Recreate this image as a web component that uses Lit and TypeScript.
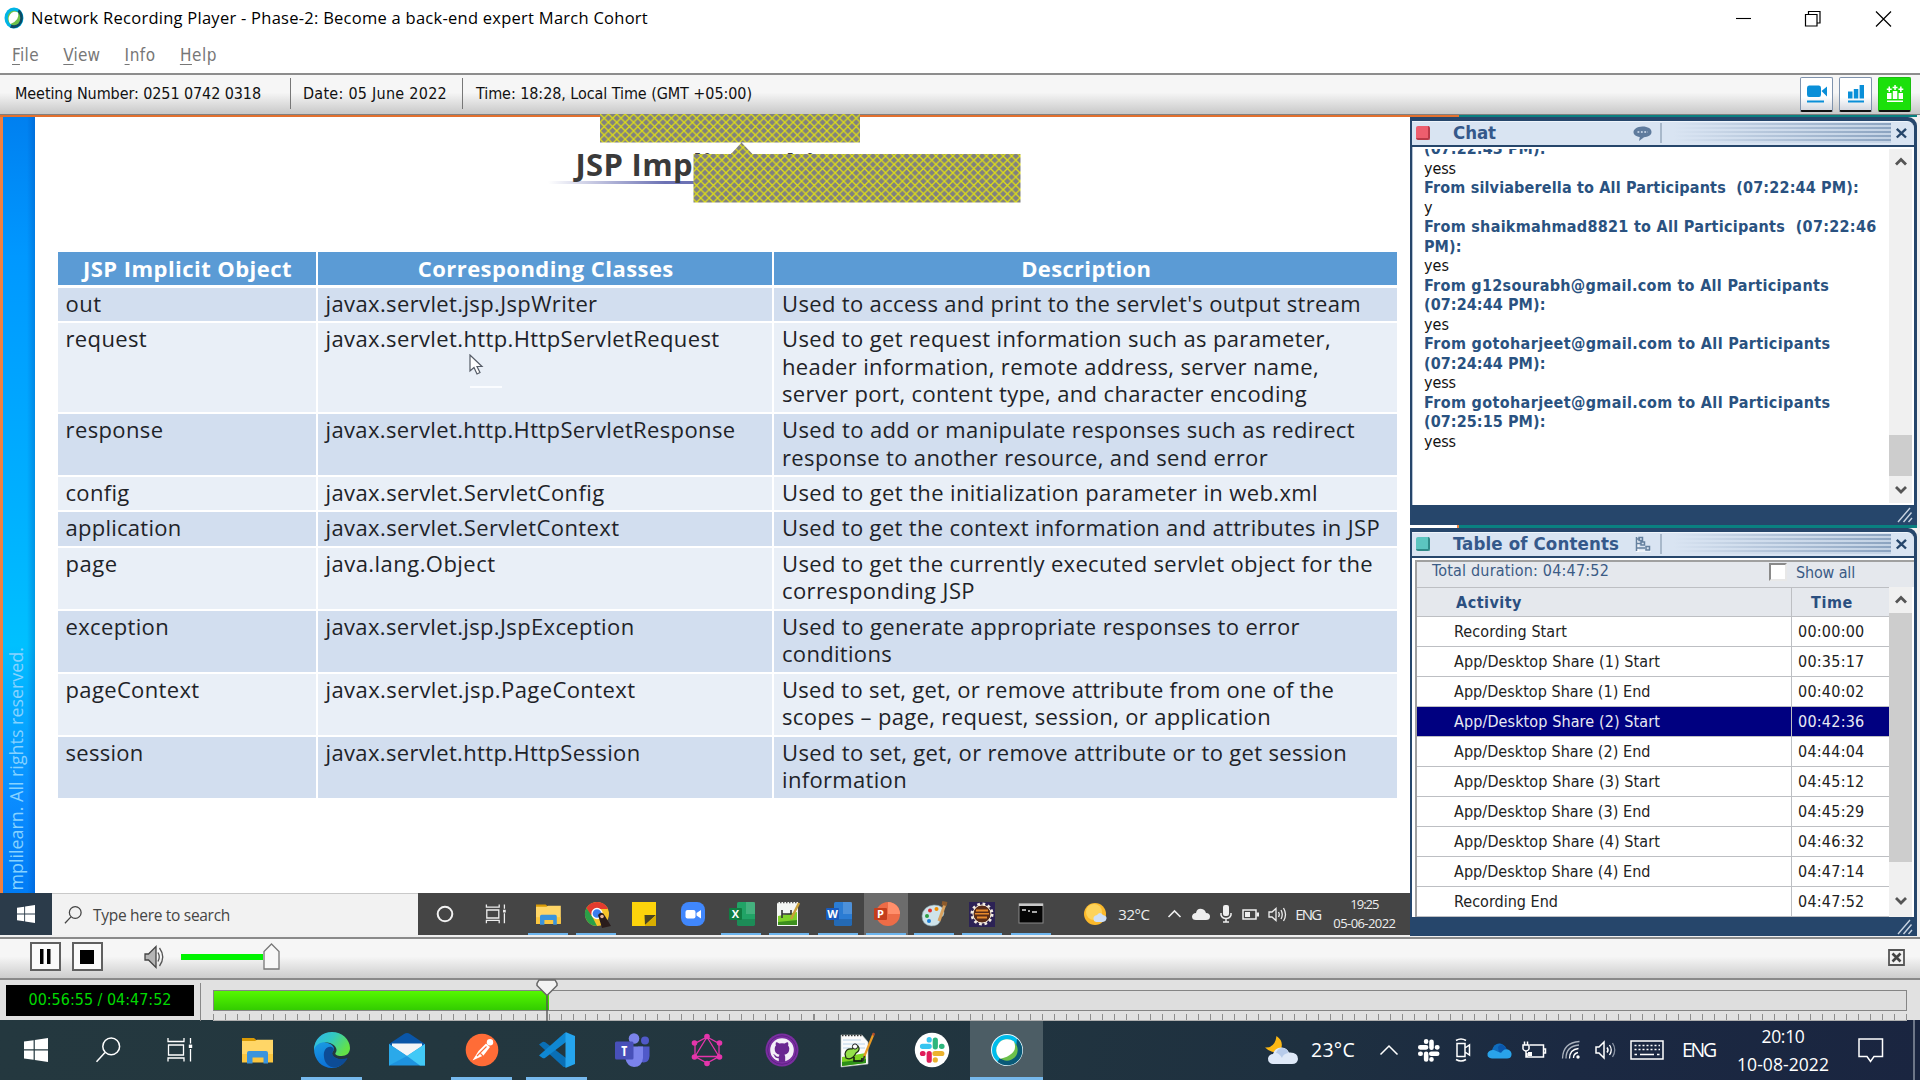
import { LitElement, html, svg, css } from "lit";
import { customElement } from "lit/decorators.js";
import { classMap } from "lit/directives/class-map.js";
import { styleMap } from "lit/directives/style-map.js";

type Line = [text: string, width: number];

const HEADERS: Line[] = [
  ["JSP Implicit Object", 209],
  ["Corresponding Classes", 256],
  ["Description", 130],
];

const OBJECTS: { h: number; name: Line; cls: Line; desc: Line[] }[] = [
  { h: 35.5, name: ["out", 36], cls: ["javax.servlet.jsp.JspWriter", 272], desc: [["Used to access and print to the servlet's output stream", 579]] },
  { h: 91, name: ["request", 81.5], cls: ["javax.servlet.http.HttpServletRequest", 394], desc: [["Used to get request information such as parameter,", 549], ["header information, remote address, server name,", 537], ["server port, content type, and character encoding", 525]] },
  { h: 62.5, name: ["response", 98], cls: ["javax.servlet.http.HttpServletResponse", 410], desc: [["Used to add or manipulate responses such as redirect", 573], ["response to another resource, and send error", 486]] },
  { h: 35.5, name: ["config", 64], cls: ["javax.servlet.ServletConfig", 279], desc: [["Used to get the initialization parameter in web.xml", 536]] },
  { h: 35.5, name: ["application", 116], cls: ["javax.servlet.ServletContext", 294], desc: [["Used to get the context information and attributes in JSP", 598]] },
  { h: 63, name: ["page", 52], cls: ["java.lang.Object", 170], desc: [["Used to get the currently executed servlet object for the", 591], ["corresponding JSP", 193]] },
  { h: 63, name: ["exception", 103.5], cls: ["javax.servlet.jsp.JspException", 309], desc: [["Used to generate appropriate responses to error", 518], ["conditions", 110]] },
  { h: 63, name: ["pageContext", 134], cls: ["javax.servlet.jsp.PageContext", 310], desc: [["Used to set, get, or remove attribute from one of the", 552], ["scopes – page, request, session, or application", 489]] },
  { h: 63.5, name: ["session", 78], cls: ["javax.servlet.http.HttpSession", 315], desc: [["Used to set, get, or remove attribute or to get session", 565], ["information", 125]] },
];

const CHAT: { text: string; w: number; head?: boolean }[] = [
  { text: "(07:22:43 PM):", w: 121.5, head: true },
  { text: "yess", w: 32 },
  { text: "From silviaberella to All Participants  (07:22:44 PM):", w: 435, head: true },
  { text: "y", w: 8 },
  { text: "From shaikmahmad8821 to All Participants  (07:22:46", w: 452.5, head: true },
  { text: "PM):", w: 37.5, head: true },
  { text: "yes", w: 25 },
  { text: "From g12sourabh@gmail.com to All Participants", w: 405, head: true },
  { text: "(07:24:44 PM):", w: 121.5, head: true },
  { text: "yes", w: 25 },
  { text: "From gotoharjeet@gmail.com to All Participants", w: 406.5, head: true },
  { text: "(07:24:44 PM):", w: 121.5, head: true },
  { text: "yess", w: 32 },
  { text: "From gotoharjeet@gmail.com to All Participants", w: 406.5, head: true },
  { text: "(07:25:15 PM):", w: 121.5, head: true },
  { text: "yess", w: 32 },
];

const TOC: [string, number, string][] = [
  ["Recording Start", 113, "00:00:00"],
  ["App/Desktop Share (1) Start", 206, "00:35:17"],
  ["App/Desktop Share (1) End", 196.5, "00:40:02"],
  ["App/Desktop Share (2) Start", 206, "00:42:36"],
  ["App/Desktop Share (2) End", 196.5, "04:44:04"],
  ["App/Desktop Share (3) Start", 206, "04:45:12"],
  ["App/Desktop Share (3) End", 196.5, "04:45:29"],
  ["App/Desktop Share (4) Start", 206, "04:46:32"],
  ["App/Desktop Share (4) End", 196.5, "04:47:14"],
  ["Recording End", 104, "04:47:52"],
];
const SELECTED = 3;

const ELAPSED = 3415;
const DURATION = 17272;

const icon = (w: number, h: number, body: unknown, vb?: string) =>
  html`<svg class="ic" width=${w} height=${h} viewBox=${vb ?? `0 0 ${w} ${h}`}>${body}</svg>`;

const winLogo = svg`<path fill="#fff" d="M8 11.6 17.6 10.2V19.3H8ZM18.8 10 32 8V19.3H18.8ZM8 20.6H17.6V29.8L8 28.4ZM18.8 20.6H32V32L18.8 30Z"/>`;
const search = (c: string, w: number) =>
  svg`<g fill="none" stroke=${c} stroke-width=${w}><circle cx="23.2" cy="16.4" r="8.4"/><path d="M17 22.6 8.5 31.8"/></g>`;
const taskView = (c: string, w: number) =>
  svg`<g fill="none" stroke=${c} stroke-width=${w}><path d="M8 8V11.5H24V8M8 31.5V28H24V31.5M8.5 15H23.5V25H8.5ZM30.5 8V13.5M30.5 19V31.5"/><path stroke="none" fill=${c} d="M28.8 14.6h3.4v3.4h-3.4z"/></g>`;
const folder = svg`<path fill="#d99a05" d="M5 8h12l3 2.500V12H5z"/><path fill="#ffd667" d="M5 11h13l2-1.200H36V32H5z"/><path fill="#fbc63f" d="M5 24H36V32.500H5z"/><path fill="#3a94dd" d="M10 33.500V23q0-2 2-2H29q2 0 2 2V33.500H26.500V27.500H15.500V33.500z"/>`;
const edge = svg`<defs><linearGradient id="e1" x1="0" y1="0" x2="1" y2=".5"><stop offset="0" stop-color="#2fb4ef"/><stop offset=".5" stop-color="#33c9c0"/><stop offset="1" stop-color="#63e247"/></linearGradient><linearGradient id="e2" x1="0" y1="0" x2=".4" y2="1"><stop offset="0" stop-color="#1b9de2"/><stop offset="1" stop-color="#0b6fd6"/></linearGradient></defs>
<path fill="url(#e2)" d="M2 19C2 13 8 11 14 12.500C21 14 23 18 21.500 20.500C17 25 23 31 34.500 29C31 35 26 38 20 38C10 38 2 30 2 19Z"/>
<path fill="#0d4c96" d="M12 27C11 20 15 16 19.500 17C22.500 18 22 20 21 21C18 26 26 31.500 35.500 28C33 33.500 28 37 22.500 37.500C17 37.500 12.500 33 12 27Z"/>
<path fill="url(#e1)" d="M2 20C2 9 10 2 20 2C30 2 38 9.500 38 18C38 23 34.500 26 29.500 26C25 26 22.500 24.500 23.500 23C26 20 24 15 18 13C11 11 4 13 2 20Z"/>`;
const mail = svg`<path fill="#0a56a8" d="M2 14 17 4Q20 2 23 4L38 14V20H2z"/><path fill="#f4f5f7" d="M5 13.500H35V24L20 30 5 24z"/><path fill="#1e93df" d="M2 14 20 26 38 14V35.500H2z"/><path fill="#42c9f6" d="M38 14 20 26 33 35.500H38z"/><path fill="#2aa9ea" d="M2 14 20 26 2 35.500z"/>`;
const postman = svg`<circle cx="20" cy="20" r="16.300" fill="#ff6c37"/><path fill="#fff" d="M10.500 30.500 16.500 21 24 13.500 28 17 21.500 25.500Z"/><circle cx="28" cy="12.300" r="3.200" fill="#fff"/><path stroke="#ff6c37" stroke-width="1.100" fill="none" d="M15 26 24.500 16.500M18.500 23.500 21 26"/>`;
const vscode = svg`<path fill="#0a6fb5" d="M2 14.500 5.500 12Q7 11.200 8.300 12.300L29 28V37L26.500 37Z"/><path fill="#0f87d2" d="M2 25.500 5.500 28Q7 28.800 8.300 27.700L29 12V3L27.500 3Z"/><path fill="#25a5ee" d="M28.500 2 38 6V34L28.500 38V28.500 12Z"/>`;
const teams = svg`<circle cx="22" cy="8.500" r="5.300" fill="#7b83eb"/><circle cx="33" cy="10.500" r="4" fill="#5059c9"/><path fill="#5059c9" d="M26 16.500H37.500V26Q37 33 31 32.500L26 30z"/><path fill="#7b83eb" d="M13 16.500H31V28Q30 37 22 37Q15 36 13.500 29z"/><rect x="3" y="11.500" width="18.500" height="18" rx="1.500" fill="#4850b9"/><text x="12.200" y="25.500" class="g" font-size="14" fill="#fff">T</text>`;
const graphql = svg`<g stroke="#e535ab" stroke-width="1.300" fill="none"><path d="M20 7 32 13.500V26.500L20 33 8 26.500V13.500ZM20 7 32 26.500H8Z"/></g><g fill="#e535ab"><circle cx="20" cy="6.500" r="2.800"/><circle cx="32.500" cy="13" r="2.800"/><circle cx="32.500" cy="27" r="2.800"/><circle cx="20" cy="33.500" r="2.800"/><circle cx="7.500" cy="27" r="2.800"/><circle cx="7.500" cy="13" r="2.800"/></g>`;
const github = svg`<circle cx="20" cy="20" r="16.500" fill="#7a2ea0"/><circle cx="20" cy="20" r="14.300" fill="none" stroke="#5f2287" stroke-width="1"/><circle cx="20" cy="20" r="11.800" fill="#f4f0f8"/><path fill="#6a2791" d="M16.800 32V28.200Q13 28.500 12.300 25.500Q11.500 24.600 11 24.200Q13 24 14 26Q15 27 16.900 26.400Q17 25.200 17.600 24.700Q12.500 24 12.700 18.600Q12.800 16.800 13.900 15.600Q13.300 14 14 12.200Q15.500 12.200 17.300 13.600Q20 12.900 22.700 13.600Q24.500 12.200 26 12.200Q26.700 14 26.100 15.600Q27.300 16.900 27.300 18.600Q27.400 24 22.400 24.700Q23.200 25.500 23.200 27V32Z"/>`;
const notepadpp = svg`<path fill="#fbfbfb" stroke="#b9c2bd" stroke-width=".6" d="M4 5H25L31 12V34L4 37Z"/><path stroke="#333" stroke-width="1.600" stroke-dasharray="1.500 1.500" d="M5 5.500H25"/><path stroke="#b9d2e8" stroke-width="1" d="M6 10H24M6 14H28M6 18H28"/><path fill="#7ed321" d="M5 27 29 23V33L5 36Z"/><path fill="#2d8f18" d="M5 32 29 29V33L5 36Z"/><path fill="#94e04a" stroke="#1d2a12" stroke-width="1.200" d="M8 24Q9 18 15 19Q17 14 21 16Q24 20 19 23Q15 31 9 28Z"/><circle cx="18" cy="16.500" r="2.600" fill="#fff" stroke="#222"/><path stroke="#111" stroke-width="1.500" fill="none" d="M17 27V31H25V28"/><path stroke="#e99b23" stroke-width="2.200" d="M36.500 4 27 27"/><path stroke="#b44b2c" stroke-width="2.200" d="M37 3 36 5.500"/><path stroke="#333" stroke-width="1.500" d="M27.500 26 26 31"/>`;
const slackMark = (a: string, b: string, c: string, d: string) => svg`<g stroke-width="5.200" stroke-linecap="round"><path stroke=${a} d="M10.500 16.300H17.200M17.200 9.500V10"/><path stroke=${b} d="M23.300 10V16.800M30 16.300H29.500"/><path stroke=${c} d="M23 23.500H29.800M23.300 29.800V30"/><path stroke=${d} d="M17.200 23.500V30.200M10.500 23.500H11"/></g>`;
const slack = svg`<circle cx="20" cy="20" r="17.200" fill="#fff"/>${slackMark("#36c5f0", "#2eb67d", "#ecb22e", "#e01e5a")}`;
const webex = svg`<circle cx="20" cy="20" r="16" fill="#eafaff"/><circle cx="20" cy="20" r="15" fill="#00bceb"/><path fill="#0a5a78" d="M30 8.800A15 15 0 0 1 10.500 31.700L14 26.500H24L29 18Z"/><circle cx="20" cy="20" r="10.700" fill="#6cc04a"/><path fill="#fff" d="M27 11.500Q32 24 13.500 28.800A10.900 10.900 0 0 1 27 11.500Z"/>`;
const moonCloud = svg`<path fill="#fdb813" d="M12.500 3Q20 8 17 16Q10 23 1 14.500Q11 15 12.500 3Z"/><path fill="#dfe9f8" d="M9 31Q4 30.500 4 25.500Q4.500 21.500 9 21Q11 14 18 14.500Q23 15 25 19.500Q34 19 34 26Q33.500 31 28 31Z"/><path fill="#b7cbea" d="M12 20Q14 14.500 19 15Q24 16 24 20Q19 21 18 25Q15 20 12 20Z"/>`;

const office = (bg: string, fg: string, ch: string) =>
  svg`<rect x="11" y="3" width="18" height="24" rx="1.500" fill=${bg}/><path fill="#fff" opacity=".16" d="M20 3h9v12h-9z"/><path fill="#000" opacity=".14" d="M11 20h18v7H11z"/><rect x="3" y="9" width="13" height="12" rx="1" fill=${fg}/><text x="9.500" y="19" class="g" font-size="11" fill="#fff">${ch}</text>`;

const INNER: { w: number; run?: boolean; on?: boolean; body: unknown }[] = [
  { w: 53, body: svg`<circle cx="15" cy="15" r="7.300" fill="none" stroke="#f2f2f2" stroke-width="2"/>` },
  { w: 52.3, body: svg`<g transform="translate(-2 -1) scale(.8)">${taskView("#eeeeee", 1.6)}</g>` },
  { w: 48.6, run: true, body: svg`<g transform="translate(-1 -1) scale(.8)">${folder}</g>` },
  { w: 48.3, run: true, body: svg`<circle cx="16" cy="15" r="12" fill="#f7c52a"/><path fill="#e33b2e" d="M16 3A12 12 0 0 1 27 10H16L9.500 17 5.500 9A12 12 0 0 1 16 3Z"/><path fill="#2b9f48" d="M5.500 9 12 19 16 27A12 12 0 0 1 5.500 9Z"/><circle cx="16" cy="14.500" r="5" fill="#3b7ded" stroke="#fff" stroke-width="1.300"/><path fill="#2a1c1c" d="M17 16Q21 11 24 17L30 27 21 29Z"/><circle cx="21" cy="17.500" r="1.800" fill="#e6b79c"/>` },
  { w: 48.3, body: svg`<path fill="#fdd30b" d="M3 3H27V27H3Z"/><path fill="#4a4424" d="M15.500 16H27L16 26Z"/><path fill="#d9ae00" d="M16 27V26L27 16V27Z"/>` },
  { w: 48.3, body: svg`<rect x="3" y="3" width="24" height="24" rx="8" fill="#4087fc"/><rect x="7.500" y="11" width="10" height="8.500" rx="2" fill="#fff"/><path fill="#fff" d="M18.500 14 23 11V19.500L18.500 16.500Z"/>` },
  { w: 48.3, run: true, body: office("#21a366", "#107c41", "X") },
  { w: 48.3, run: true, body: svg`<path fill="#f4f6f4" d="M3 3H24V27H3Z"/><path stroke="#555" stroke-width="1.500" stroke-dasharray="1.500 1.500" d="M3 3.500H24"/><path fill="#7fd12a" d="M4 17 23 13V26H4Z"/><path fill="#3c8f1e" d="M4 23 23 21V26H4Z"/><path stroke="#333" stroke-width="1.600" fill="none" d="M8 11V19M8 15H17V11"/><path stroke="#c9a03a" stroke-width="2.500" d="M25 4 17 20"/>` },
  { w: 48.3, run: true, body: office("#2b7cd3", "#185abd", "W") },
  { w: 48.3, run: true, on: true, body: svg`<circle cx="17" cy="15" r="12" fill="#ed6c47"/><path fill="#ff8f6b" d="M17 3A12 12 0 0 1 29 15H17Z"/><rect x="3" y="9" width="13" height="12" rx="1" fill="#c43e1c"/><text x="9.500" y="19" class="g" font-size="11" fill="#fff">P</text>` },
  { w: 48.3, run: true, body: svg`<path fill="#cfe3ea" stroke="#8aa5ad" stroke-width=".6" d="M3 17Q4 7 15 6Q25 6 25 14Q25 18 21 18Q19 19 21 22Q20 27 12 27Q3 26 3 17Z"/><circle cx="8" cy="17" r="2" fill="#2f9e44"/><circle cx="11" cy="11.500" r="2" fill="#e03131"/><circle cx="17.500" cy="10" r="2" fill="#f08c00"/><circle cx="10" cy="22" r="2" fill="#1c7ed6"/><path stroke="#d9a25f" stroke-width="3" d="M26 5 20 22"/><path stroke="#8c5a2b" stroke-width="4" d="M23 4 28 5"/>` },
  { w: 48.3, run: true, body: svg`<path fill="#2c2255" d="M2 3H28V28H2Z"/><circle cx="15" cy="15" r="9.500" fill="#43201a" stroke="#f4ede2" stroke-width="4" stroke-dasharray="2.500 2.500"/><circle cx="15" cy="15" r="9" fill="#5a2c18" stroke="#f4ede2" stroke-width="1"/><path fill="#e8892b" d="M9 10.500H21V12.500H9ZM8 14H22V15.500H8ZM10 17.500H20V19.500H10Z"/>` },
  { w: 48.3, run: true, body: svg`<rect x="3" y="5" width="24" height="19" fill="#050505" stroke="#8a8a8a" stroke-width="1"/><path fill="#c8c8c8" d="M3 4.500H27V7H3Z"/><path stroke="#ddd" stroke-width="1.300" d="M6 11H10M12 12H14M16 13H21"/>` },
];

const OUTER: { run?: boolean; on?: boolean; body: unknown }[] = [
  { body: folder }, { run: true, body: edge }, { body: mail }, { run: true, body: postman }, { run: true, body: vscode },
  { body: teams }, { body: graphql }, { body: github }, { body: notepadpp }, { body: slack }, { run: true, on: true, body: webex },
];

@customElement("app-root")
export class AppRoot extends LitElement {
  static styles = css`
    :host { display: block; width: 1920px; height: 1080px; overflow: hidden; background: #fff; color: #000; }
    * { box-sizing: border-box; }
    .page { width: 1920px; height: 1080px; display: grid; grid-template-rows: 36px 37px 42px 822px 41px 42px 60px; font-family: "DejaVu Sans Condensed", "DejaVu Sans", sans-serif; font-stretch: condensed; font-size: 16px; }
    .t { display: inline-block; white-space: pre; flex: none; }
    .ic { display: block; flex: none; overflow: visible; }
    .g { font-family: "Open Sans", sans-serif; font-weight: 700; text-anchor: middle; }

    .titlebar { display: flex; align-items: center; padding: 0 28px 0 4px; }
    .titlebar .name { font: 16.5px/22px "Open Sans", sans-serif; margin-left: 7px; }
    .wbtns { margin-left: auto; display: flex; gap: 55px; padding-top: 1px; }
    .wbtns .ic:first-child { margin-right: -2px; }
    .menu { display: flex; align-items: center; padding-left: 12px; gap: 24.3px; color: #777; font-size: 17px; }
    .menu u { text-underline-offset: 3px; text-decoration-thickness: 1px; }

    .info { border-top: 2px solid #8d8d8d; border-bottom: 1px solid #808080; background: linear-gradient(#f6f6f6 45%, #c8c8c8); display: flex; align-items: center; padding: 0 9px 2px 15px; font-size: 16px; color: #111; }
    .bar { width: 1px; height: 31px; background: #777; flex: none; }
    .m1 { margin: 0 12px 0 29px; } .m2 { margin: 0 13px 0 15px; }
    .tools { margin-left: auto; display: flex; gap: 6px; align-self: flex-start; padding-top: 2px; }
    .tool { width: 33px; height: 35px; border: 1px solid #7f93ad; border-bottom: 2px solid #111; border-radius: 2px; background: linear-gradient(#fff 60%, #d5d8e0); display: grid; place-items: center; }
    .tool.go { background: #1be00b; border-color: #1bbf10; border-bottom-color: #111; }

    .main { display: flex; background: #f0f0f0; }
    .stage { width: 1410px; display: grid; grid-template-columns: 1410px; grid-template-rows: 2px 776px 42px; flex: none; }
    .edge { background: #e3702e; }
    .slide { display: flex; background: #fff; border-left: 3px solid #f08040; position: relative; }
    .strip { width: 32px; flex: none; background: linear-gradient(90deg, rgba(0,60,160,0) 75%, rgba(0,60,160,.28)), linear-gradient(#0080f0, #0098ff 18%, #00b0ff 50%, #00c0ff 68%, #0a8cff 88%, #007cf5); display: flex; justify-content: center; align-items: flex-end; overflow: hidden; }
    .copy { writing-mode: vertical-rl; transform: rotate(180deg); color: #86d2ff; font: 17.900px/24px "Open Sans", sans-serif; white-space: pre; margin-bottom: 2px; margin-right: 6px; }
    .body { padding-left: 22.5px; flex: 1; display: flex; flex-direction: column; }
    .heading { height: 135px; padding: 26px 0 0 518px; }
    .heading .t { font: 700 31px/42px "Open Sans", sans-serif; color: #3a3a3a; }
    .rule { height: 3px; width: 260px; margin-left: -28px; margin-top: -4px; background: linear-gradient(90deg, rgba(90,95,170,0), rgba(100,106,176,.95) 45%); }
    .tbl { width: 1339px; font: 22px/27.500px "Open Sans", sans-serif; color: #1e2328; display: flex; flex-direction: column; }
    .tr { display: grid; grid-template-columns: 260px 456.500px 622.500px; }
    .tr > div { border-right: 2px solid #fff; border-bottom: 2px solid #fff; padding: 2px 0 0 8px; background: #e9eff7; display: flex; flex-direction: column; align-items: flex-start; }
    .tr:nth-child(even) > div { background: #d2deef; }
    .tr.head > div { background: #5b9bd5; color: #fff; font-weight: 700; align-items: center; height: 35.500px; padding: 3px 0 0 2px; border-bottom-width: 3px; }
    .tr > div:last-child { border-right: 0; }
    .note { position: absolute; left: 596.500px; top: -3px; }
    .cursor { position: absolute; left: 466px; top: 237px; }
    .blip { position: absolute; left: 467px; top: 269px; width: 32px; height: 2px; background: #fafcff; }

    .sbar { background: #454545; display: flex; align-items: stretch; height: 42px; color: #eee; font: 15px/20px "Open Sans", sans-serif; }
    .sstart { width: 52px; background: #2b3b4a; display: grid; place-items: center; flex: none; }
    .ssearch { width: 366px; background: #f2f2f2; color: #454545; display: flex; align-items: center; padding-left: 7px; border-top: 1px solid #c9c9c9; gap: 6px; font-size: 15.500px; flex: none; }
    .cell { display: flex; justify-content: center; align-items: center; position: relative; flex: none; }
    .cell.run::after { content: ""; position: absolute; left: 50%; width: 40px; margin-left: -20px; bottom: 0; height: 2px; background: #6db5ee; }
    .cell.on { background: linear-gradient(90deg, transparent 2px, #6c6c6c 2px, #6c6c6c 46px, transparent 46px); }
    .stray { display: flex; align-items: center; margin-left: 17.500px; }
    .sw1 { width: 46px; } .sw2 { width: 43px; padding-left: 8px; } .sw3 { width: 32px; } .sw4 { width: 36px; }
    .sclock { display: flex; flex-direction: column; align-items: center; width: 64px; font-size: 13px; line-height: 19px; margin-left: 12px; }

    .side { width: 510px; display: grid; grid-template-rows: 2px 408px 3px 408px; flex: none; }
    .teal { background: linear-gradient(90deg, #fff 47px, #f08040 47px, #f08040 49px, #0a8080 49px, #0a8080 507px, #eee 507px); }
    .teal.top { background: linear-gradient(90deg, #e3702e 49px, #0a8080 49px, #0a8080 507px, #eee 507px); }
    .panel { width: 507px; background: #26466b; border-radius: 0 9px 0 0; padding: 4px 3px 0 2px; display: flex; flex-direction: column; }
    .phead { height: 24px; border-top: 1px solid #eef4fb; background: #d9e4f2; display: flex; align-items: center; padding: 0 7px 1px 4px; border-radius: 0 7px 0 0; color: #35588a; font-size: 18.500px; font-weight: 700; line-height: 22px; }
    .led { width: 14px; height: 14px; border-radius: 2px; background: #ee5e6e; border-right: 2px solid #b93a48; border-bottom: 2px solid #b93a48; margin-right: 23px; flex: none; }
    .led.c { background: #5cc5c0; border-color: #2f8a88; }
    .led + .t + .ic { margin-left: auto; }
    .stripes { width: 231px; height: 20px; margin: 0 5px 0 8px; border-left: 2px solid #a8b8ca; background: linear-gradient(90deg, #d9e4f2 5%, rgba(217,228,242,.6) 40%, rgba(217,228,242,0)), repeating-linear-gradient(#8ba3c0 0 2px, #c4d3e5 2px 4px); flex: none; }
    .pbody { margin-top: 2px; background: #fff; flex: none; width: 502px; display: flex; overflow: hidden; }
    .pfoot { flex: 1; display: flex; justify-content: flex-end; align-items: center; padding-right: 1px; }
    .chat { height: 358px; padding: 2px 0 2px 11px; border-left: 1px solid #b7c4d4; }
    .lines { flex: 1; overflow: hidden; height: 354px; }
    .lines .inner { margin-top: -10px; }
    .ln { height: 19.500px; line-height: 19.500px; font-size: 16px; color: #111; }
    .ln.h { font-weight: 700; color: #2a5280; }
    .scroll { width: 23px; background: #f0f0f0; display: flex; flex-direction: column; align-items: center; flex: none; margin-right: 2px; }
    .sup, .sdn { height: 27px; display: grid; place-items: center; }
    .sup { height: 26px; }
    .g1 { height: 262px; } .th1 { height: 41px; }
    .th2 { height: 249px; } .g2 { height: 25px; }
    .thumb { width: 23px; background: #cdcdcd; }
    .toc { height: 359px; padding: 2px 0 0 3px; flex-direction: column; }
    .tframe { flex: 1; border: 2px solid #a0a0a0; border-right: 0; border-bottom: 0; display: flex; flex-direction: column; overflow: hidden; }
    .dur { height: 25px; background: #e5e8ed; display: flex; align-items: center; padding: 0 0 8px 15px; color: #3b5b85; flex: none; }
    .dur .t:last-child { padding-top: 3px; }
    .cb { width: 18px; height: 18px; background: #fff; border: 2px solid; border-color: #8a8a8a #e8e8e8 #e8e8e8 #8a8a8a; margin: 2px 9px 0 160px; flex: none; }
    .tcols { display: flex; flex: 1; height: 330px; }
    .tt { width: 472px; flex: none; }
    .row { display: grid; grid-template-columns: 375px 97px; height: 30px; border-bottom: 1px solid #bdbfc3; align-items: center; color: #222; }
    .row > div { height: 29px; display: flex; align-items: center; }
    .row > div:first-child { padding-left: 37px; border-right: 1px solid #bdbfc3; }
    .row > div + div { padding-left: 6px; }
    .row.hd { background: #e5e8ed; border-top: 1px solid #bdbfc3; font-weight: 700; color: #2b4f80; }
    .row.hd > div { height: 28px; }
    .row.hd > div:first-child { padding-left: 39px; }
    .row.hd > div + div { padding-left: 19px; }
    .row.sel { background: #000080; color: #e9e9f4; }

    .ctl { border-top: 2px solid #8a8a8a; background: linear-gradient(#f6f6f6 45%, #cdcdcd); display: flex; align-items: center; padding: 0 15px 4px 29.500px; }
    .btn { width: 31px; height: 29px; border: 2px solid #606060; background: #fafafa; display: grid; place-items: center; margin-right: 11px; }
    .spk { margin-left: 30px; flex: none; }
    .vol { width: 82px; height: 6px; background: #00f400; margin-left: 16.500px; }
    .end { margin-left: auto; margin-top: 2px; }
    .time { border-top: 2px solid #8a8a8a; background: #e1e1e1; display: flex; align-items: flex-start; padding: 3px 0 0 6px; position: relative; }
    .lcd { width: 188px; height: 31px; margin-top: 2px; padding-bottom: 2px; background: #000; color: #00d800; display: grid; place-items: center; }
    .sep { width: 1px; height: 38px; background: #888; margin: 0 12px 0 6px; }
    .track { width: 1694px; margin-top: 7px; }
    .rail { height: 21px; border: 1px solid #858585; background: #dedede; }
    .fill { height: 100%; background: linear-gradient(#55f800, #33cc00); }
    .ticks { height: 7px; margin-top: 3px; background: repeating-linear-gradient(90deg, #8d8d8d 0 1px, transparent 1px 12.010px); border-bottom: 1px solid #b0b0b0; }
    .play { position: absolute; left: 536px; top: -1px; }

    .os { background: linear-gradient(100deg, #24383f, #22363f 45%, #1e3040 68%, #1b2942 82%, #1a2540); display: flex; color: #fff; }
    .oc { width: 72px; display: grid; place-items: center; }
    .oc.app { width: 75px; }
    .oc.first { margin-left: 3px; }
    .oc.run { background: linear-gradient(#76b9ed, #76b9ed) center bottom / 61px 3px no-repeat; }
    .oc.on { background: linear-gradient(#76b9ed, #76b9ed) center bottom / 73px 3px no-repeat, linear-gradient(#4c5d65, #4c5d65) center / 73px 100% no-repeat; }
    .tray { margin-left: auto; display: flex; align-items: center; font: 19.500px/26px "Open Sans", sans-serif; }
    .tc { display: grid; place-items: center; flex: none; }
    .tc:first-child { margin-right: 7px; }
    .more { width: 58px; padding-left: 10px; }
    .clk { width: 107px; margin-right: 3.500px; display: flex; flex-direction: column; align-items: center; font-size: 17.500px; line-height: 28.500px; }
    .lang { width: 62px; }
    .deskline { width: 7px; height: 60px; border-left: 2px solid #6d7688; margin-left: 11px; }
  `;

  protected firstUpdated() {
    this.renderRoot.querySelectorAll<HTMLElement>("[data-w]").forEach((el) => {
      const natural = el.getBoundingClientRect().width;
      const chars = (el.textContent ?? "").length;
      if (natural && chars) el.style.letterSpacing = `${((Number(el.dataset.w) - natural) / chars).toFixed(3)}px`;
    });
  }

  private t(text: string, w: number, cls = "") {
    return html`<span class="t ${cls}" data-w=${w}>${text}</span>`;
  }

  private chevrons(up: boolean) {
    return icon(12, 10, svg`<path fill="none" stroke="#555" stroke-width="2.800" d=${up ? "M1 7.5 6 2.500 11 7.500" : "M1 2 6 7 11 2"}/>`);
  }

  private grip() {
    return icon(16, 16, svg`<path stroke="#c6d2e0" stroke-width="1.400" fill="none" d="M1 15 13 1M6.500 15 14.500 5.500M11.500 15 15 11"/>`);
  }

  private header(title: string, w: number, led: string, glyph: unknown) {
    return html`<div class="phead">
      <i class="led ${led}"></i>${this.t(title, w)}${icon(19, 17, glyph)}
      <div class="stripes"></div>
      ${icon(11, 10, svg`<path stroke="#26466b" stroke-width="2.400" d="M.8.8 10 9.500M10 .8.8 9.500"/>`)}
    </div>`;
  }

  private slide() {
    return html`<div class="slide">
      <div class="strip"><span class="copy">mplilearn. All rights reserved.</span></div>
      <div class="body">
        <div class="heading">${this.t("JSP Implicit Objects", 304)}<div class="rule"></div></div>
        <div class="tbl">
          <div class="tr head">${HEADERS.map((h) => html`<div>${this.t(...h)}</div>`)}</div>
          ${OBJECTS.map((o) => html`<div class="tr" style=${styleMap({ height: `${o.h}px` })}>
            <div>${this.t(...o.name)}</div><div>${this.t(...o.cls)}</div><div>${o.desc.map((d) => this.t(...d))}</div>
          </div>`)}
        </div>
      </div>
      <svg class="note" width="424" height="92" viewBox="0 0 424 92">
        <defs><pattern id="hatch" width="8.400" height="8.400" patternUnits="userSpaceOnUse">
          <rect width="8.400" height="8.400" fill="#808080"/>
          <path stroke="#dede16" stroke-width="1.300" d="M-1-1 9.400 9.400M9.400-1-1 9.400"/></pattern></defs>
        <path fill="url(#hatch)" d="M0 0H260V28.500H0ZM93.500 40H131L141.500 28.500 152.500 40H420.500V88.500H93.500Z"/>
      </svg>
      <svg class="cursor" width="16" height="22" viewBox="0 0 16 22"><path fill="#fff" stroke="#555b66" stroke-width="1.200" d="M1 1V17L5 13.500 8 20 11 18.500 8 12.500H13Z"/></svg>
      <div class="blip"></div>
    </div>`;
  }

  private slideBar() {
    return html`<div class="sbar">
      <div class="sstart">${icon(30, 30, winLogo, "0 0 40 40")}</div>
      <div class="ssearch">${icon(28, 28, search("#444", 1.8), "0 0 40 40")}${this.t("Type here to search", 137)}</div>
      ${INNER.map((c) => html`<div class="cell ${classMap({ run: !!c.run, on: !!c.on })}" style=${styleMap({ width: `${c.w}px` })}>${icon(30, 30, c.body)}</div>`)}
      <div class="stray">
        <div class="cell sw1">${icon(24, 24, svg`<circle cx="12" cy="12" r="11" fill="#fbb92b"/><circle cx="11" cy="10" r="8" fill="#fdd35a"/><path fill="#cfe0f5" d="M11 19Q9 14 14 13Q17 9 20 13Q25 14 23 18Q22 20 18 20H13Z"/>`)}</div>
        ${this.t("32°C", 31)}
        <div class="cell sw2">${icon(13, 8, svg`<path stroke="#eee" stroke-width="1.600" fill="none" d="M.5 7 6.500 1 12.500 7"/>`)}</div>
        ${icon(18, 12, svg`<path fill="#eee" d="M4 12Q0 12 0 8.500Q.5 5 4 5Q5 0 10 1Q13 1.500 14 5Q18 5 18 8.500Q18 12 14 12Z"/>`)}
        <div class="cell sw3">${icon(12, 18, svg`<rect x="3" y="0" width="6" height="11" rx="2" fill="#eee"/><path stroke="#eee" stroke-width="1.500" fill="none" d="M1 8V10Q2 13.500 6 13.500T11 10V8M6 13V17M3 17H9"/>`)}</div>
        ${icon(17, 11, svg`<path stroke="#eee" stroke-width="1.500" fill="none" d="M1 1H14V10H1Z"/><path fill="#eee" d="M3 3H8V8H3ZM14.500 3.500H17V7.500H14.500Z"/>`)}
        <div class="cell sw4">${icon(19, 15, svg`<path stroke="#eee" stroke-width="1.300" fill="none" d="M1 5H4L8 1.500V13.500L4 10H1ZM10.500 5Q12 7.500 10.500 10M13 3Q15.500 7.500 13 12M15.500 1Q19.500 7.500 15.500 14"/>`)}</div>
        ${this.t("ENG", 25)}
        <div class="sclock">${this.t("19:25", 28)}${this.t("05-06-2022", 62)}</div>
      </div>
    </div>`;
  }

  private chatPanel() {
    return html`<section class="panel">
      ${this.header("Chat", 43, "", svg`<path fill="#5f7b9d" d="M9.500 1.500C15 1.500 18.500 3.800 18.500 7S15 12 11 12.200L6 16 6.800 12C2.500 11.500.5 9.500.5 7S4 1.500 9.500 1.500Z"/><path stroke="#d9e4f2" stroke-width="1.600" stroke-dasharray="1.800 1.600" d="M4.500 7H15"/>`)}
      <div class="pbody chat">
        <div class="lines"><div class="inner">${CHAT.map((l) => html`<div class="ln ${l.head ? "h" : ""}">${this.t(l.text, l.w)}</div>`)}</div></div>
        <div class="scroll"><div class="sup">${this.chevrons(true)}</div><div class="g1"></div><div class="thumb th1"></div><div class="sdn">${this.chevrons(false)}</div></div>
      </div>
      <div class="pfoot">${this.grip()}</div>
    </section>`;
  }

  private tocPanel() {
    return html`<section class="panel">
      ${this.header("Table of Contents", 166, "c", svg`<path stroke="#fff" stroke-width="1.200" fill="none" d="M5 2V16M3 15H18"/><path stroke="#64809f" stroke-width="1.500" fill="none" d="M3.500 1V15M3 3H7M3 7.500H8M3 12H12M6 1.500H9.500V4.500H6ZM8 6H11.500V9H8ZM13 10.500H16.500V14H13Z"/>`)}
      <div class="pbody toc"><div class="tframe">
        <div class="dur">${this.t("Total duration: 04:47:52", 177)}<i class="cb"></i>${this.t("Show all", 59)}</div>
        <div class="tcols">
          <div class="tt">
            <div class="row hd"><div>${this.t("Activity", 66)}</div><div>${this.t("Time", 42)}</div></div>
            ${TOC.map(([n, w, time], i) => html`<div class="row ${i === SELECTED ? "sel" : ""}"><div>${this.t(n, w)}</div><div>${this.t(time, 66.5)}</div></div>`)}
          </div>
          <div class="scroll"><div class="sup">${this.chevrons(true)}</div><div class="thumb th2"></div><div class="g2"></div><div class="sdn">${this.chevrons(false)}</div></div>
        </div>
      </div></div>
      <div class="pfoot">${this.grip()}</div>
    </section>`;
  }

  private tray() {
    const s = (d: string, w = 1.5) => svg`<path fill="none" stroke="#fff" stroke-width=${w} d=${d}/>`;
    const cell = (w: number, iw: number, ih: number, body: unknown) => html`<div class="tc" style=${styleMap({ width: `${w}px` })}>${icon(iw, ih, body)}</div>`;
    return html`<div class="tray">
      ${cell(46, 34, 34, moonCloud)}
      ${this.t("23°C", 44)}
      <div class="tc more">${icon(18, 10, s("M.5 9.500 9 1 17.500 9.500"))}</div>
      ${cell(24.5, 31, 31, svg`<g transform="translate(-2 -2) scale(.88)">${slackMark("#fff", "#fff", "#fff", "#fff")}</g>`)}
      ${cell(49, 18, 24, s("M4 5.500H12V18.500H4ZM12 10 16.500 7V17L12 14M3 2.500Q8-.5 13 2.500M3 21.500Q8 24.500 13 21.500"))}
      ${cell(22, 25, 17, svg`<path fill="#0f6cbd" d="M5 8Q7 1 13 1.500Q17 2 19 6L12 14H4Z"/><path fill="#0a57ad" d="M11 5Q14 0 18 5L20 7 12 11Z"/><path fill="#29a3ea" d="M5 16.500Q0 16 .5 11.500Q2 7.500 7 8L14 11Q17 6 21 7.500Q25 9 24.500 13Q24 16.500 20 16.500Z"/>`)}
      ${cell(49, 25, 20, svg`${s("M9 5H22.500V17H6V13M22.500 9H24.500V13H22.500M2 5H8V9Q7 11 5 11Q3 11 2 9ZM3.500 5V1.500M6.500 5V1.500M5 11V17H8")}<path fill="#fff" d="M7 12h4v4H7z"/>`)}
      ${cell(27, 20, 20, svg`<path fill="none" stroke="#fff" stroke-width="1.300" d="M12.500 18Q12.500 13.500 17 12.500M8.500 18.500Q8.500 9.500 17.500 8.500"/><path fill="none" stroke="#aab2bd" stroke-width="1.300" d="M5 18.500Q5 6 18 5M1.500 18.500Q2 2.500 18.500 1.500"/><circle cx="17" cy="17" r="1.700" fill="#fff"/>`)}
      ${cell(42, 22, 20, svg`${s("M1 7H4L9 2V18L4 13H1ZM12 7.500Q14 10 12 12.500")}${s("M14.500 5Q18 10 14.500 15", 1.3)}<path fill="none" stroke="#8a93a3" stroke-width="1.300" d="M17.500 3Q22 10 17.500 17"/>`)}
      ${cell(41, 34, 20, svg`${s("M1 1H33V19H1Z")}<path stroke="#fff" stroke-width="1.500" stroke-dasharray="2 2" d="M4.500 5.500H30M4.500 9.500H30"/>${s("M4.500 14.500H7M10 14.500H24M27 14.500H29.500")}`)}
      <div class="tc lang">${this.t("ENG", 33)}</div>
      <div class="clk">${this.t("20:10", 43)}${this.t("10-08-2022", 92)}</div>
      ${cell(62, 26, 26, s("M1 2H24.500V19.500H16L12.500 24.500 9 19.500H1Z"))}
      <div class="deskline"></div>
    </div>`;
  }

  render() {
    return html`<div class="page">
      <header class="titlebar">
        ${icon(20, 22, svg`<ellipse cx="10" cy="11" rx="9.500" ry="10.500" fill="#00b4e6"/><path fill="#0a4a66" d="M15 2.200A9.500 10.500 0 0 1 6 20.500Z"/><ellipse cx="10" cy="11" rx="6.300" ry="7.300" fill="#6cc04a"/><path fill="#fff" d="M14 5.500Q16 13 6.500 17A6.300 7.300 0 0 1 14 5.500Z"/>`)}
        ${this.t("Network Recording Player - Phase-2: Become a back-end expert March Cohort", 617, "name")}
        <div class="wbtns">
          ${icon(16, 16, svg`<path stroke="#000" stroke-width="1.100" d="M0 7.500H15"/>`)}
          ${icon(16, 16, svg`<path stroke="#000" stroke-width="1.200" fill="none" d="M.5 3.500H12V15H.5ZM3.500 3.500V.5H15V12H12"/>`)}
          ${icon(16, 16, svg`<path stroke="#000" stroke-width="1.200" d="M0 .5 15 15.500M15 .5 0 15.500"/>`)}
        </div>
      </header>
      <nav class="menu">
        <span class="t" data-w="27"><u>F</u>ile</span><span class="t" data-w="37"><u>V</u>iew</span><span class="t" data-w="31"><u>I</u>nfo</span><span class="t" data-w="37"><u>H</u>elp</span>
      </nav>
      <div class="info">
        ${this.t("Meeting Number: 0251 0742 0318", 246)}<i class="bar m1"></i>${this.t("Date: 05 June 2022", 144)}<i class="bar m2"></i>${this.t("Time: 18:28, Local Time (GMT +05:00)", 276)}
        <div class="tools">
          <div class="tool">${icon(20, 18, svg`<path fill="#0a8fd8" d="M2 .5H12Q14 .5 14 3V9.500Q14 12 12 12H2Q0 12 0 9.500V3Q0 .5 2 .5ZM14.500 6 20 1.500V11.500ZM0 15.500H17V17.500H0Z"/>`)}</div>
          <div class="tool">${icon(18, 18, svg`<path fill="#0a8fd8" d="M1 6.500H5.500V13.500H1ZM6.800 4H11.300V13.500H6.800ZM12.600 0H17V13.500H12.600ZM1 15.500H17V17.500H1Z"/>`)}</div>
          <div class="tool go">${icon(18, 18, svg`<path fill="#fff" d="M1 8H5.500V14H1ZM6.800 6H11.300V14H6.800ZM12.600 8H17V14H12.600ZM1 15.500H17V17H1ZM2.500 1.500H4V7H2.500ZM.8 3.500H5.700V5H.8ZM8.300 0H9.800V5H8.300ZM6.600 1.700H11.500V3.200H6.600ZM14.100 1.500H15.600V7H14.100ZM12.400 3.500H17.300V5H12.400Z"/>`)}</div>
        </div>
      </div>
      <main class="main">
        <div class="stage"><div class="edge"></div>${this.slide()}${this.slideBar()}</div>
        <aside class="side"><div class="teal top"></div>${this.chatPanel()}<div class="teal"></div>${this.tocPanel()}</aside>
      </main>
      <div class="ctl">
        <div class="btn">${icon(11, 15, svg`<path d="M0 0H3.500V15H0ZM7 0H10.500V15H7Z"/>`)}</div>
        <div class="btn">${icon(14, 14, svg`<path d="M0 0H14V14H0Z"/>`)}</div>
        <div class="spk">${icon(21, 24, svg`<path fill="#b5b5b5" stroke="#444" stroke-width="1.300" d="M1 9H4.500L12 1.500V22.500L4.500 15H1Z"/><path fill="none" stroke="#555" stroke-width="1.300" d="M14 7.500Q16.500 12 14 16.500M15.500 3Q22 12 15.500 21"/>`)}</div>
        <div class="vol"></div>
        ${icon(17, 27, svg`<path fill="#f7f7f7" stroke="#777" stroke-width="1.300" d="M8.500 1 16 8.500V26H1V8.500Z"/>`)}
        <div class="end">${icon(17, 17, svg`<path fill="#f2f2f2" stroke="#555" stroke-width="1.800" d="M1 1H16V16H1Z"/><path stroke="#444" stroke-width="2.600" d="M4.500 4.500 12.500 12.500M12.500 4.500 4.500 12.500"/>`)}</div>
      </div>
      <div class="time">
        <div class="lcd">${this.t("00:56:55 / 04:47:52", 143)}</div>
        <i class="sep"></i>
        <div class="track">
          <div class="rail"><div class="fill" style=${styleMap({ width: `${(ELAPSED / DURATION) * 100}%` })}></div></div>
          <div class="ticks"></div>
        </div>
        <svg class="play" width="22" height="42" viewBox="0 0 22 42"><path stroke="#555" stroke-width="1.400" d="M11 16V42"/><path fill="#f3f3f3" stroke="#666" stroke-width="1.500" d="M3 1H19L21 4.500V6.500L11 16.500 1 6.500V4.500Z"/></svg>
      </div>
      <footer class="os">
        <div class="oc">${icon(40, 40, winLogo)}</div>
        <div class="oc">${icon(40, 40, search("#fff", 1.5))}</div>
        <div class="oc">${icon(40, 40, taskView("#fff", 1.3))}</div>
        ${OUTER.map((c, i) => html`<div class="oc app ${classMap({ first: i === 0, run: !!c.run, on: !!c.on })}">${icon(40, 40, c.body)}</div>`)}
        ${this.tray()}
      </footer>
    </div>`;
  }
}
